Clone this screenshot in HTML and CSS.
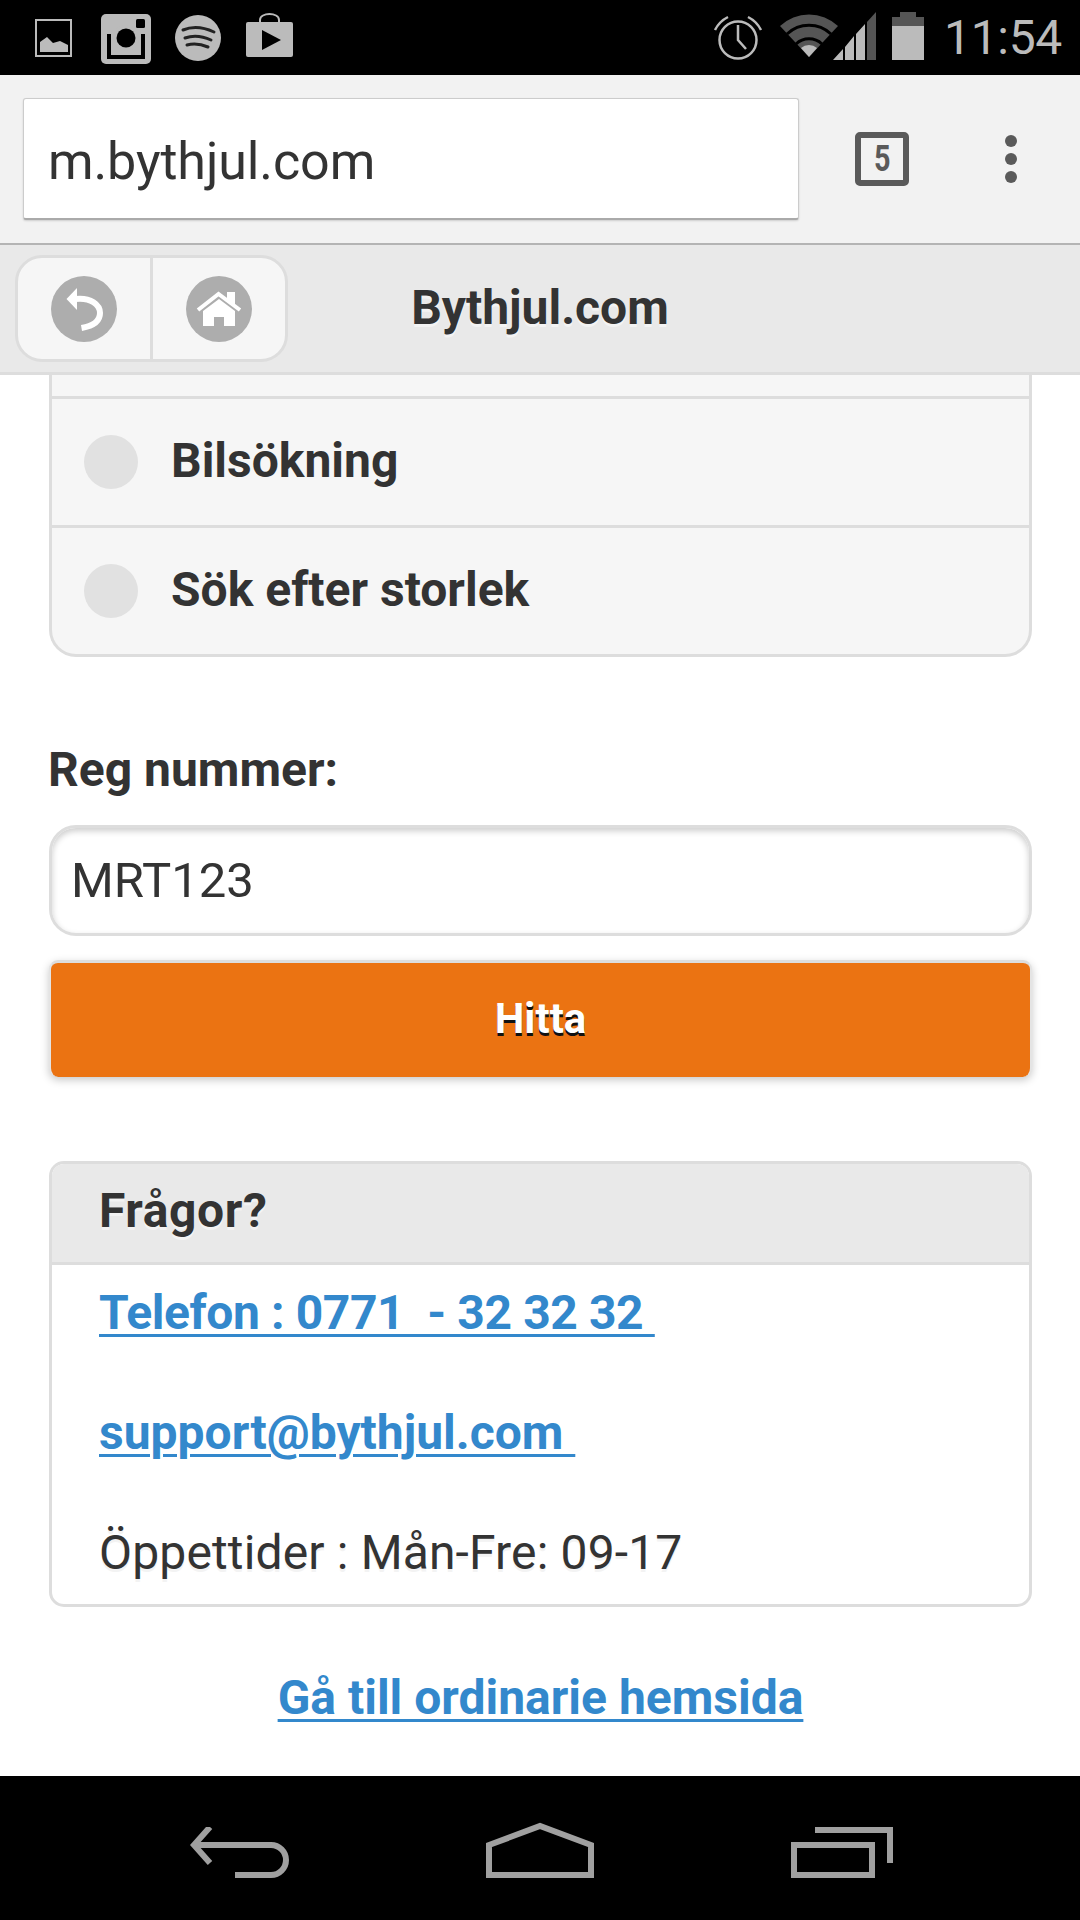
FILE: index.html
```html
<!DOCTYPE html>
<html lang="sv">
<head>
<meta charset="utf-8">
<title>Bythjul.com</title>
<link rel="stylesheet" href="styles.css">
</head>
<body>
<div class="phone">
  <div class="status">
    <svg class="ic-gallery" width="37" height="38" viewBox="0 0 37 38"><rect x="1" y="1" width="35" height="36" fill="none" stroke="#bbb" stroke-width="2"/><path d="M5 33V23L12 18L18 24L25 22L33 26V33Z" fill="#bbb"/></svg>
    <svg class="ic-insta" width="50" height="50" viewBox="0 0 50 50"><rect width="50" height="50" rx="5" fill="#bbb"/><rect x="35" y="5" width="9" height="9" rx="1.5" fill="#000"/><path d="M8 20V43H42V20" fill="none" stroke="#000" stroke-width="4"/><circle cx="25" cy="24" r="13" fill="#bbb"/><circle cx="25" cy="24" r="9.5" fill="#000"/></svg>
    <svg class="ic-spot" width="46" height="46" viewBox="0 0 46 46"><circle cx="23" cy="23" r="23" fill="#bbb"/><path d="M8 15C18 11 28 12 39 17M10 23C19 20 27 21 36 25M12 30C19 28 26 29 33 32" fill="none" stroke="#222" stroke-width="3" stroke-linecap="round"/></svg>
    <svg class="ic-bag" width="47" height="46" viewBox="0 0 47 46"><path d="M14 11V9C14 1 33 1 33 9V11" fill="none" stroke="#bbb" stroke-width="2"/><rect y="11" width="47" height="35" rx="2" fill="#bbb"/><path d="M16 19L35 29L16 39Z" fill="#000"/></svg>
    <div class="status-right">
      <svg class="ic-alarm" width="50" height="48" viewBox="0 0 50 48"><circle cx="25" cy="26" r="18.5" fill="none" stroke="#bbb" stroke-width="2.5"/><path d="M25 11V26L33 35" fill="none" stroke="#bbb" stroke-width="2.5"/><path d="M2 16C5 10 9 6 15 3M35 3C41 6 45 10 48 16" fill="none" stroke="#bbb" stroke-width="2.5"/></svg>
      <svg class="ic-wifi" width="58" height="44" viewBox="0 0 58 44"><path d="M29 43L0 12A42 42 0 0 1 58 12Z" fill="#555"/><path d="M7 20A32 32 0 0 1 51 20M16 30A19 19 0 0 1 42 30" fill="none" stroke="#000" stroke-width="3"/><path d="M29 43L21 34A12 12 0 0 1 37 34Z" fill="#bbb"/></svg>
      <svg class="ic-signal" width="43" height="48" viewBox="0 0 43 48"><path d="M0 48L10 37V48ZM12 35L21 24V48H12ZM23 22L32 12V48H23Z" fill="#bbb"/><path d="M34 10L43 0V48H34Z" fill="#555"/></svg>
      <svg class="ic-batt" width="32" height="48" viewBox="0 0 32 48"><path d="M8 0H24V5H32V14H0V5H8Z" fill="#555"/><rect y="14" width="32" height="34" fill="#bbb"/></svg>
      <span class="clock">11:54</span>
    </div>
  </div>

  <div class="toolbar">
    <div class="urlbar">m.bythjul.com</div>
    <div class="tabs"><span class="tabs-num">5</span></div>
    <div class="menu"><i></i><i></i><i></i></div>
  </div>

  <div class="header">
    <div class="hbtns">
      <div class="hbtn"><svg width="66" height="66" viewBox="0 0 66 66"><circle cx="33" cy="33" r="33" fill="#adadad"/><path d="M15.500 23L26 12V34Z" fill="#fff"/><path d="M24 23C40 21 49 29 49 37C49 45 42 50 30.500 52" fill="none" stroke="#fff" stroke-width="6"/></svg></div>
      <div class="hbtn hbtn-last"><svg width="66" height="66" viewBox="0 0 66 66"><circle cx="33" cy="33" r="33" fill="#adadad"/><path d="M41 16H49V30L41 24Z" fill="#fff"/><path d="M12 34L32.500 18L54 34" fill="none" stroke="#fff" stroke-width="4"/><path d="M17 35L33 23L49 35V50H38V41H28V50H17Z" fill="#fff"/></svg></div>
    </div>
    <h1 class="title">Bythjul.com</h1>
  </div>

  <div class="content">
    <ul class="list">
      <li class="stub"></li>
      <li class="row"><span class="radio"></span>Bilsökning</li>
      <li class="row row-last"><span class="radio"></span>Sök efter storlek</li>
    </ul>

    <div class="label">Reg nummer:</div>
    <div class="field">MRT123</div>
    <div class="submit">Hitta</div>

    <section class="panel">
      <div class="panel-head">Frågor?</div>
      <div class="panel-body">
        <p class="line line-phone"><a class="link" href="#">Telefon : 0771&nbsp; - 32 32 32&nbsp;</a></p>
        <p class="line line-mail"><a class="link" href="#">support@bythjul.com&nbsp;</a></p>
        <p class="line line-hours">Öppettider : Mån-Fre: 09-17</p>
      </div>
    </section>

    <div class="site-link"><a class="link" href="#">Gå till ordinarie hemsida</a></div>
  </div>

  <div class="nav">
    <svg width="99" height="51" viewBox="0 0 99 51"><path d="M20 0L4 18L20 36" fill="none" stroke="#a0a0a0" stroke-width="6"/><path d="M4 18H81A15 15 0 0 1 81 48H45" fill="none" stroke="#a0a0a0" stroke-width="6"/></svg>
    <svg width="108" height="56" viewBox="0 0 108 56"><path d="M3 53V23L54 4L105 23V53Z" fill="none" stroke="#a0a0a0" stroke-width="6"/></svg>
    <svg width="102" height="51" viewBox="0 0 102 51"><rect x="3" y="18" width="78" height="30" fill="none" stroke="#a0a0a0" stroke-width="6"/><path d="M24 3H99V36" fill="none" stroke="#a0a0a0" stroke-width="6"/></svg>
  </div>
</div>
</body>
</html>
```
FILE: styles.css
```css
* { box-sizing: border-box; }
html, body { margin: 0; padding: 0; background: #fff; }
body { font-family: Roboto, "Liberation Sans", sans-serif; color: #333; }
.phone { width: 1080px; height: 1920px; display: flex; flex-direction: column; overflow: hidden; }

/* Android status bar */
.status { height: 75px; flex: none; background: #000; display: flex; align-items: flex-start; padding-left: 35px; }
.ic-gallery { margin-top: 19px; margin-right: 29px; }
.ic-insta { margin-top: 14px; margin-right: 24px; }
.ic-spot { margin-top: 15px; margin-right: 25px; }
.ic-bag { margin-top: 11px; }
.status-right { margin-left: auto; display: flex; align-items: flex-start; padding-right: 22px; }
.ic-alarm { margin-top: 14px; margin-right: 17px; }
.ic-wifi { margin-top: 14px; margin-right: -5px; }
.ic-signal { margin-top: 12px; margin-right: 16px; }
.ic-batt { margin-top: 12px; margin-right: 20px; }
.clock { width: 114px; color: #bbb; font-size: 48px; line-height: 75px; font-weight: 400; letter-spacing: -.3px; white-space: nowrap; }

/* Browser toolbar */
.toolbar { height: 170px; flex: none; background: #f2f2f2; border-bottom: 2px solid #b4b4b4; display: flex; align-items: flex-start; padding-left: 23px; }
.urlbar { width: 776px; height: 122px; margin-top: 23px; background: #fff; border-radius: 3px; border: 1px solid #ccc; border-bottom: 2px solid #aaa; box-shadow: 0 1px 2px rgba(0,0,0,.15); font-size: 52px; letter-spacing: -.1px; line-height: 126px; padding-left: 24px; color: #333; }
.tabs { width: 54px; height: 54px; margin-top: 57px; margin-left: 56px; border: 6px solid #5a5a5a; border-radius: 5px; display: flex; align-items: center; justify-content: center; }
.tabs-num { font-size: 36px; font-weight: 700; color: #5a5a5a; transform: scaleX(.8); }
.menu { margin-top: 60px; margin-left: 96px; display: flex; flex-direction: column; gap: 6px; }
.menu i { display: block; width: 12px; height: 12px; border-radius: 50%; background: #5a5a5a; }

/* Page header */
.header { height: 130px; flex: none; background: #e9e9e9; border-bottom: 3px solid #ddd; display: flex; align-items: flex-start; position: relative; padding: 10px 0 0 15px; }
.hbtns { display: flex; width: 273px; height: 107px; background: #f6f6f6; border: 3px solid #ddd; border-radius: 27px; }
.hbtn { width: 135px; display: flex; align-items: center; justify-content: center; border-right: 3px solid #ddd; }
.hbtn-last { border-right: 0; width: 132px; }
.title { position: absolute; left: 0; right: 0; top: 0; margin: 0; text-align: center; font-size: 48px; font-weight: 700; line-height: 125px; color: #333; text-shadow: 0 3px 0 #f3f3f3; }

/* Content */
.content { flex: 1; min-height: 0; overflow: hidden; padding: 0 48px 0 49px; }
.list { list-style: none; margin: 0; padding: 0; background: #f6f6f6; border: 3px solid #ddd; border-top: 0; border-radius: 0 0 27px 27px; }
.stub { height: 24px; border-bottom: 3px solid #ddd; }
.row { height: 129px; display: flex; align-items: center; font-size: 48px; font-weight: 700; color: #333; border-bottom: 3px solid #ddd; padding: 0 0 4px 32px; }
.row-last { border-bottom: 0; height: 126px; }
.radio { width: 54px; height: 54px; border-radius: 50%; background: #e1e1e1; margin: 4px 33px 0 0; flex: none; }
.label { margin: 83px 0 0 -1px; font-size: 48px; font-weight: 700; line-height: 60px; color: #333; }
.field { margin-top: 25px; height: 111px; background: #fff; border: 3px solid #ddd; border-radius: 27px; box-shadow: inset 0 3px 6px rgba(0,0,0,.2); font-size: 49px; line-height: 105px; padding-left: 19px; color: #333; }
.submit { margin-top: 24px; height: 117px; border-top: 3px solid #ddd; border-left: 2px solid #e4e4e4; border-right: 2px solid #e4e4e4; background: #eb7312; border-radius: 9px; box-shadow: 0 3px 9px rgba(0,0,0,.22); color: #fff; font-size: 42px; font-weight: 700; line-height: 112px; text-align: center; text-shadow: 0 3px 0 #111; }

.panel { margin-top: 84px; border: 3px solid #ddd; border-radius: 15px; overflow: hidden; }
.panel-head { height: 101px; background: #e9e9e9; border-bottom: 3px solid #ddd; font-size: 48px; letter-spacing: .6px; font-weight: 700; line-height: 94px; padding-left: 47px; color: #333; text-shadow: 0 3px 0 #f3f3f3; }
.panel-body { height: 339px; padding-left: 47px; }
.line { margin: 0; font-size: 48px; line-height: 60px; }
.line-phone { padding-top: 18px; font-weight: 700; letter-spacing: -.4px; }
.line-mail { padding-top: 60px; font-weight: 700; }
.line-hours { padding-top: 60px; color: #333; letter-spacing: .15px; text-shadow: 0 3px 0 #f3f3f3; }
.link { color: #3388cc; font-weight: 700; text-decoration: underline; text-decoration-thickness: 3px; text-underline-offset: 5px; }
.site-link { margin-top: 61px; text-align: center; font-size: 48px; line-height: 60px; }

/* Android navigation bar */
.nav { height: 144px; flex: none; background: #000; display: flex; align-items: flex-end; gap: 197px; padding: 0 0 42px 190px; }
```
